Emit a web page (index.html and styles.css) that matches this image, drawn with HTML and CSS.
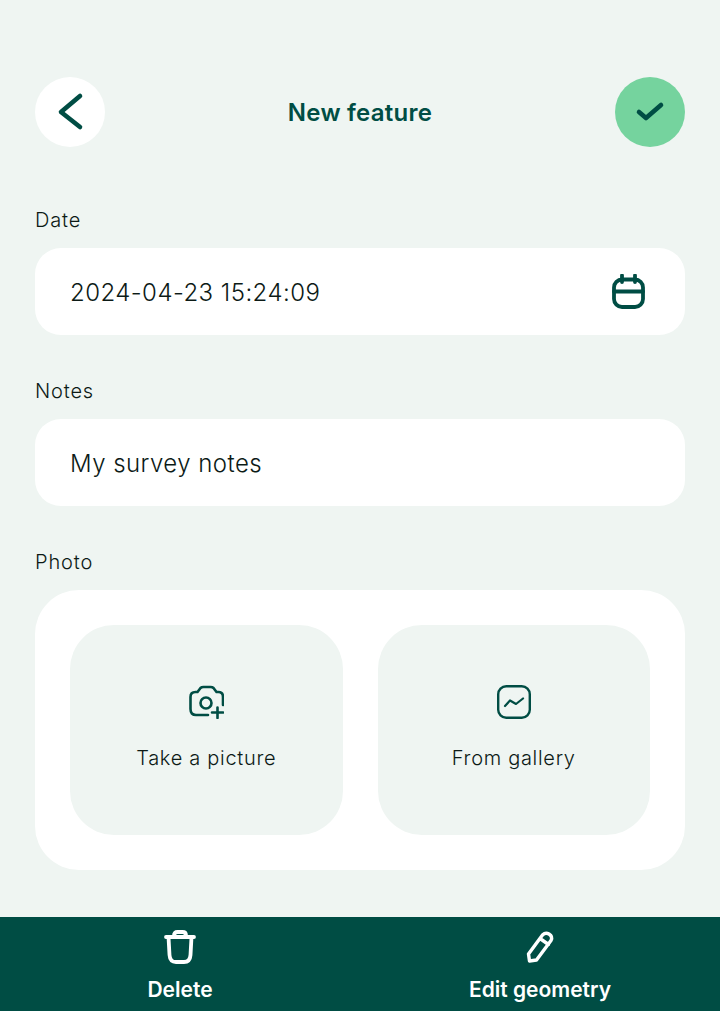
FILE: index.html
```html
<!DOCTYPE html>
<html lang="en">
<head>
    <meta charset="UTF-8">
    <meta name="viewport" content="width=device-width, initial-scale=1.0">
    <title>New feature</title>
    <link rel="stylesheet" href="styles.css">
</head>
<body>
    <div class="page">
        <header class="top">
            <button class="circle back">
                <svg width="70" height="70" viewBox="0 0 70 70" fill="none"><path d="M45 19 L26 35 L45 50" class="dark" stroke-width="4.6"/></svg>
            </button>
            <h1>New feature</h1>
            <button class="circle save">
                <svg width="70" height="70" viewBox="0 0 70 70" fill="none"><path d="M24 35 L31 41 L46 28" class="dark" stroke-width="4.6"/></svg>
            </button>
        </header>

        <main class="form">
            <label class="label">Date</label>
            <div class="field">
                <span>2024-04-23 15:24:09</span>
                <svg width="34" height="36" viewBox="0 0 34 36" fill="none">
                    <rect x="3" y="5.500" width="29" height="27.500" rx="8" class="dark" stroke-width="3.800"/>
                    <path d="M3 17.500 H32 M11 1.500 V8 M24 1.500 V8" class="dark" stroke-width="3.800"/>
                </svg>
            </div>

            <label class="label">Notes</label>
            <div class="field">
                <span>My survey notes</span>
            </div>

            <label class="label">Photo</label>
            <div class="photo">
                <div class="tile">
                    <svg width="36" height="34" viewBox="0 0 36 34" fill="none">
                        <path d="M20 30 H8 Q2.500 30 2.500 24 V12 Q2.500 7 7.500 7 H9.500 L12.500 3 Q13.500 2 15.500 2 H22.500 Q24.500 2 25.500 3 L28.500 7 H30.500 Q35 7 35 12 V20" class="dark" stroke-width="2.600"/>
                        <circle cx="18" cy="18" r="5.500" class="dark" stroke-width="2.600"/>
                        <path d="M29.500 22.500 V33 M24 27.500 H35" class="dark" stroke-width="2.600"/>
                    </svg>
                    <span>Take a picture</span>
                </div>
                <div class="tile">
                    <svg width="34" height="34" viewBox="0 0 34 34" fill="none">
                        <rect x="1.200" y="1.200" width="31.600" height="31.600" rx="8" class="dark" stroke-width="2.400"/>
                        <path d="M8 21 L13 15.500 L19 19 L26 13.500" class="dark" stroke-width="2.200"/>
                    </svg>
                    <span>From gallery</span>
                </div>
            </div>
        </main>

        <footer class="bottom">
            <button class="action">
                <svg width="34" height="36" viewBox="0 0 34 36" fill="none">
                    <path d="M3 8 H31 M11 8 V6.500 Q11 3 14.500 3 H19.500 Q23 3 23 6.500 V8 M5.500 8 L6.500 26 Q7 33 13 33 H21 Q27 33 27.500 26 L28.500 8" class="light" stroke-width="3.800"/>
                </svg>
                <span>Delete</span>
            </button>
            <button class="action">
                <svg width="34" height="36" viewBox="0 0 34 36" fill="none">
                    <path d="M6.500 32 L5.500 25 L19.500 6 Q22.500 3 26 5 Q30 7.500 28 11.500 L13.500 31 Z M17 9.500 L25.500 15.500" class="light" stroke-width="3.400"/>
                </svg>
                <span>Edit geometry</span>
            </button>
        </footer>
    </div>
</body>
</html>
```
FILE: styles.css
```css
*{
    box-sizing: border-box;
}
html, body{
    margin: 0;
    height: 100%;
}
body{
    background-color: #eff5f2;
    font-family: "Inter", "Liberation Sans", sans-serif;
    color: #0c1a16;
}
button{
    border: 0;
    padding: 0;
    background: none;
    font-family: inherit;
}
.dark{
    stroke: #004d44;
    stroke-linecap: round;
    stroke-linejoin: round;
}
.light{
    stroke: #ffffff;
    stroke-linecap: round;
    stroke-linejoin: round;
}
.page{
    height: 1011px;
    display: flex;
    flex-direction: column;
    padding-top: 77px;
}

.top{
    display: flex;
    align-items: center;
    justify-content: space-between;
    padding: 0 35px;
}
.top h1{
    margin: 0;
    font-size: 24px;
    font-weight: 600;
    letter-spacing: 0.25px;
    color: #004d44;
}
.circle{
    display: block;
    width: 70px;
    height: 70px;
    border-radius: 50%;
}
.circle svg{
    display: block;
}
.back{
    background-color: #ffffff;
}
.save{
    background-color: #75d39e;
}

.form{
    flex: 1;
    padding: 0 35px;
    margin-top: 62px;
}
.label{
    display: block;
    height: 23px;
    line-height: 23px;
    font-size: 20px;
    font-weight: 350;
    letter-spacing: 0.85px;
    margin-bottom: 16px;
}
.field{
    height: 87px;
    margin-bottom: 45px;
    padding: 1px 40px 0 35px;
    display: flex;
    align-items: center;
    justify-content: space-between;
    background-color: #ffffff;
    border-radius: 26px;
    font-size: 24px;
    font-weight: 350;
    letter-spacing: 0.45px;
}
.photo{
    height: 280px;
    padding: 35px;
    display: grid;
    grid-template-columns: 1fr 1fr;
    gap: 35px;
    background-color: #ffffff;
    border-radius: 44px;
}
.tile{
    display: flex;
    flex-direction: column;
    align-items: center;
    padding-top: 60px;
    background-color: #eff5f2;
    border-radius: 44px;
    font-size: 20px;
    font-weight: 350;
    letter-spacing: 0.7px;
}
.tile span{
    margin-top: 27px;
}

.bottom{
    height: 94px;
    display: grid;
    grid-template-columns: 1fr 1fr;
    background-color: #004d44;
}
.action{
    display: flex;
    flex-direction: column;
    align-items: center;
    padding-top: 12px;
    color: #ffffff;
    font-size: 21px;
    font-weight: 600;
}
.action span{
    margin-top: 12px;
}
```
